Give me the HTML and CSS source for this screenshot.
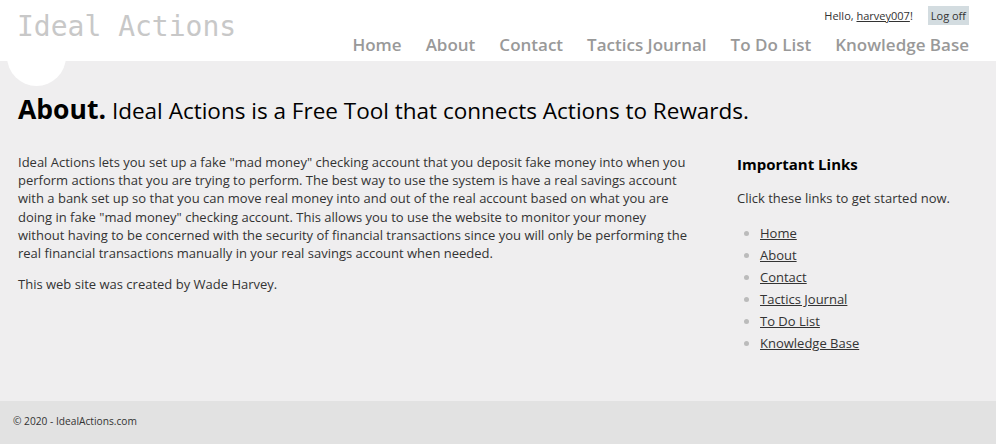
FILE: index.html
```html
<!DOCTYPE html>
<html lang="en">
<head>
<meta charset="utf-8">
<title>About - Ideal Actions</title>
<link rel="stylesheet" href="styles.css">
</head>
<body>
<header class="site-header">
  <div class="logo-circle"></div>
  <p class="site-title">Ideal Actions</p>
  <div class="header-right">
    <div class="login">
      <span class="hello">Hello, <a href="#" class="username">harvey007</a>!</span>
      <a href="#" class="logoff">Log off</a>
    </div>
    <nav class="menu">
      <a href="#">Home</a>
      <a href="#">About</a>
      <a href="#">Contact</a>
      <a href="#">Tactics Journal</a>
      <a href="#">To Do List</a>
      <a href="#">Knowledge Base</a>
    </nav>
  </div>
</header>
<main class="content">
  <div class="title-row">
    <h1 class="title">About.</h1>
    <h2 class="subtitle">Ideal Actions is a Free Tool that connects Actions to Rewards.</h2>
  </div>
  <div class="columns">
    <article class="article">
      <p>Ideal Actions lets you set up a fake "mad money" checking account that you deposit fake money into when you perform actions that you are trying to perform. The best way to use the system is have a real savings account with a bank set up so that you can move real money into and out of the real account based on what you are doing in fake "mad money" checking account. This allows you to use the website to monitor your money without having to be concerned with the security of financial transactions since you will only be performing the real financial transactions manually in your real savings account when needed.</p>
      <p>This web site was created by Wade Harvey.</p>
    </article>
    <aside class="aside">
      <h3>Important Links</h3>
      <p>Click these links to get started now.</p>
      <ul class="links">
        <li><a href="#">Home</a></li>
        <li><a href="#">About</a></li>
        <li><a href="#">Contact</a></li>
        <li><a href="#">Tactics Journal</a></li>
        <li><a href="#">To Do List</a></li>
        <li><a href="#">Knowledge Base</a></li>
      </ul>
    </aside>
  </div>
</main>
<footer class="site-footer">
  <p>&copy; 2020 - IdealActions.com</p>
</footer>
</body>
</html>
```

FILE: styles.css
```css
* { box-sizing: border-box; }
html, body { margin: 0; padding: 0; }
body {
  background: #efeeef;
  color: #333;
  font-family: "Open Sans", "Noto Sans", sans-serif;
  font-size: 13px;
  min-height: 444px;
  display: flex;
  flex-direction: column;
}
a { color: #333; }

.site-header {
  position: relative;
  background: #fff;
  height: 61px;
  display: flex;
  justify-content: space-between;
  padding: 0 27px 0 17px;
}
.logo-circle {
  position: absolute;
  left: 7px;
  top: 27px;
  width: 59px;
  height: 59px;
  border-radius: 50%;
  background: #fff;
}
.site-title {
  position: relative;
  margin: 9px 0 0;
  font-family: "DejaVu Sans Mono", "Liberation Mono", monospace;
  font-size: 28px;
  color: #c8c8c8;
  line-height: 36px;
}
.header-right {
  display: flex;
  flex-direction: column;
  align-items: flex-end;
}
.login {
  margin-top: 6px;
  display: flex;
  align-items: center;
  gap: 15px;
  font-size: 11px;
  height: 19px;
}
.login .username { color: #333; }
.logoff {
  background: #d3dce0;
  text-decoration: none;
  padding: 0 3px;
  line-height: 19px;
  font-size: 11px;
}
.menu {
  display: flex;
  gap: 24px;
  margin-top: 6px;
}
.menu a {
  color: #999;
  text-decoration: none;
  font-size: 17px;
  font-weight: 600;
  line-height: 28px;
}

.content {
  flex: 1;
  width: 960px;
  margin: 0 auto;
}
.title-row {
  display: flex;
  align-items: baseline;
  gap: 6px;
  margin-top: 30px;
  height: 40px;
}
.title {
  margin: 0;
  font-size: 26.5px;
  font-weight: 700;
  color: #000;
}
.subtitle {
  margin: 0;
  font-size: 22.5px;
  font-weight: 400;
  color: #000;
}
.columns {
  display: flex;
  margin-top: 22px;
}
.article {
  width: 676px;
}
.article p {
  margin: 0 0 13px;
  line-height: 18.2px;
}
.aside {
  margin-left: auto;
  width: 241px;
}
.aside h3 {
  margin: 0;
  font-size: 15px;
  font-weight: 700;
  color: #000;
  line-height: 22px;
}
.aside p {
  margin: 13px 0 14px;
  line-height: 20px;
}
.links {
  margin: 0;
  padding-left: 23px;
  list-style: disc;
}
.links li {
  line-height: 22px;
}
.links li::marker { color: #bbb; }

.site-footer {
  background: #e2e2e2;
  height: 43px;
  padding: 0 13px 4px;
  display: flex;
  align-items: center;
  font-size: 10.2px;
}
.site-footer p { margin: 0; }
```
